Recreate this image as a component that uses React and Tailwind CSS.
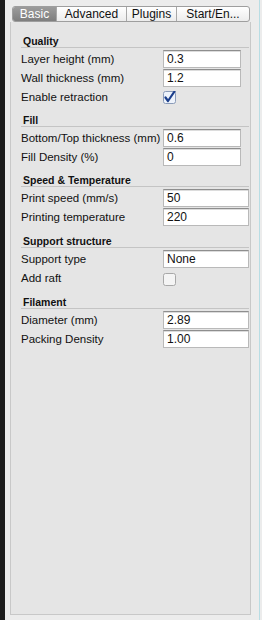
import React from "react";

const font = { fontFamily: '"Liberation Sans", Arial, sans-serif' };

function Header({ children, pt }) {
  return (
    <div className={pt}>
      <div className="h-[14px] leading-[14px] border-b border-[#c4c4c4] pl-[2px] text-[10.5px] font-bold text-[#111]">
        {children}
      </div>
    </div>
  );
}

function InputRow({ label, value, wide }) {
  return (
    <div className="flex h-[19px] items-start">
      <div className="w-[142px] h-[18px] leading-[18px] shrink-0 text-[11.5px] text-[#111] whitespace-nowrap">{label}</div>
      <div
        className={`${wide ? "w-[86px]" : "w-[78px]"} h-[18px] bg-white border border-[#b9b9b9] border-t-[#8e8e8e] shadow-[inset_0_1px_0_#dcdcdc] flex items-center pl-[3px] text-[12px] text-[#111]`}
      >
        {value}
      </div>
    </div>
  );
}

function CheckRow({ label, checked, tall }) {
  return (
    <div className={`flex ${tall ? "h-[20px]" : "h-[19px]"} items-center`}>
      <div className="w-[142px] shrink-0 text-[11.5px] text-[#111] whitespace-nowrap">{label}</div>
      <svg width="13" height="13" viewBox="0 0 13 13">
        <rect x="0.5" y="0.5" width="12" height="12" rx="2" fill={checked ? "#eef3fb" : "#f4f4f4"} stroke={checked ? "#8a9bb8" : "#a8a8a8"} />
        {checked && (
          <path d="M2.5 6.5 L5 10 L11.5 0.5" fill="none" stroke="#1c3f8c" strokeWidth="2.2" strokeLinecap="round" strokeLinejoin="round" />
        )}
      </svg>
    </div>
  );
}

export default function App() {
  return (
    <div className="flex w-[262px] h-[620px] bg-[#ececec] overflow-hidden" style={font}>
      <div className="w-[5px] bg-[#1c1c1c] shrink-0" />
      <div className="flex-1 flex flex-col pl-[5px] pt-[6px]">
        <div className="flex h-[16px] ml-[2px] w-[238px] rounded-[3px] border border-[#9e9e9e] bg-gradient-to-b from-white to-[#ececec] text-[12px] overflow-hidden">
          <div className="w-[43px] bg-gradient-to-b from-[#9c9c9c] to-[#7e7e7e] text-white flex items-center justify-center">Basic</div>
          <div className="w-[70px] border-l border-[#a8a8a8] flex items-center justify-center text-[#111]">Advanced</div>
          <div className="w-[50px] border-l border-[#a8a8a8] flex items-center justify-center text-[#111]">Plugins</div>
          <div className="flex-1 border-l border-[#a8a8a8] flex items-center justify-center text-[#111]">Start/En...</div>
        </div>
        <div className="w-[241px] h-[593px] bg-[#e5e5e5] border border-t-0 border-[#c8c8c8] px-[10px] pr-[1px]">
          <Header pt="pt-[12px]">Quality</Header>
          <div className="mt-[2px]">
            <InputRow label="Layer height (mm)" value="0.3" />
            <InputRow label="Wall thickness (mm)" value="1.2" />
            <CheckRow label="Enable retraction" checked />
          </div>
          <Header pt="pt-[6px]">Fill</Header>
          <div className="mt-[2px]">
            <InputRow label="Bottom/Top thickness (mm)" value="0.6" />
            <InputRow label="Fill Density (%)" value="0" />
          </div>
          <Header pt="pt-[6px]">Speed &amp; Temperature</Header>
          <div className="mt-[2px]">
            <InputRow label="Print speed (mm/s)" value="50" wide />
            <InputRow label="Printing temperature" value="220" wide />
          </div>
          <Header pt="pt-[7px]">Support structure</Header>
          <div className="mt-[2px]">
            <InputRow label="Support type" value="None" wide />
            <CheckRow label="Add raft" tall />
          </div>
          <Header pt="pt-[6px]">Filament</Header>
          <div className="mt-[2px]">
            <InputRow label="Diameter (mm)" value="2.89" wide />
            <InputRow label="Packing Density" value="1.00" wide />
          </div>
        </div>
      </div>
      <div className="w-[1px] bg-[#b8dde4] shrink-0 mr-[2px]" />
    </div>
  );
}
